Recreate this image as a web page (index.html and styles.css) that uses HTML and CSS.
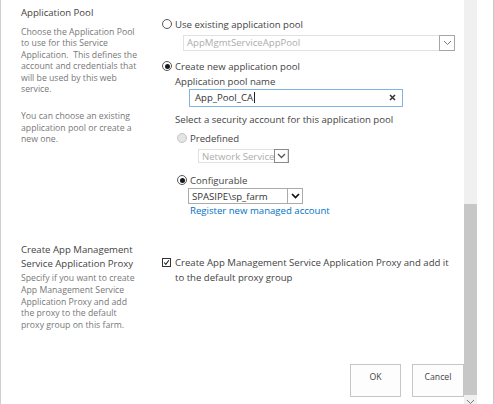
FILE: index.html
```html
<!DOCTYPE html>
<html lang="en">
<head>
<meta charset="utf-8">
<title>Application Pool</title>
<link rel="stylesheet" href="styles.css">
</head>
<body>
<div class="frame">
  <div class="content">
    <section class="section sec1">
      <div class="label-col">
        <h3 class="heading">Application Pool</h3>
        <p class="desc">Choose the Application Pool<br>to use for this Service<br>Application.&nbsp; This defines the<br>account and credentials that<br>will be used by this web<br>service.</p>
        <p class="desc para2">You can choose an existing<br>application pool or create a<br>new one.</p>
      </div>
      <div class="ctrl-col">
        <div class="opt opt-top"><span class="radio"></span><span>Use existing application pool</span></div>
        <div class="select sel-existing disabled"><span class="value">AppMgmtServiceAppPool</span><span class="arrow"><svg width="9" height="6" viewBox="0 0 9 6"><path d="M1 1 L4.5 4.5 L8 1" fill="none" stroke="#7a7a7a" stroke-width="1"/></svg></span></div>
        <div class="opt opt-new"><span class="radio checked"></span><span>Create new application pool</span></div>
        <div class="text-line name-label">Application pool name</div>
        <div class="input"><span class="value">App_Pool_CA</span><span class="caret"></span><span class="clear"><svg width="7" height="7" viewBox="0 0 7 7"><path d="M1 1 L6 6 M6 1 L1 6" stroke="#333" stroke-width="1.5" fill="none"/></svg></span></div>
        <div class="text-line sec-label">Select a security account for this application pool</div>
        <div class="opt opt-sub opt-pre"><span class="radio disabled"></span><span>Predefined</span></div>
        <div class="select sel-ns disabled"><span class="value">Network Service</span><span class="arrow"><svg width="9" height="6" viewBox="0 0 9 6"><path d="M1 1 L4.5 4.5 L8 1" fill="none" stroke="#555" stroke-width="1.3"/></svg></span></div>
        <div class="opt opt-sub opt-conf"><span class="radio checked"></span><span>Configurable</span></div>
        <div class="select sel-sp"><span class="value">SPASIPE\sp_farm</span><span class="arrow"><svg width="9" height="6" viewBox="0 0 9 6"><path d="M1 1 L4.5 4.5 L8 1" fill="none" stroke="#111" stroke-width="1.7"/></svg></span></div>
        <a class="link" href="#">Register new managed account</a>
      </div>
    </section>
    <section class="section sec2">
      <div class="label-col">
        <h3 class="heading">Create App Management<br>Service Application Proxy</h3>
        <p class="desc desc2">Specify if you want to create<br>App Management Service<br>Application Proxy and add<br>the proxy to the default<br>proxy group on this farm.</p>
      </div>
      <div class="ctrl-col">
        <div class="check-row"><span class="checkbox"><svg width="9" height="9" viewBox="0 0 9 9"><path d="M1.5 4.5 L3.6 6.8 L7.6 1.6" fill="none" stroke="#222" stroke-width="1.4"/></svg></span><span>Create App Management Service Application Proxy and add it<br>to the default proxy group</span></div>
      </div>
    </section>
    <div class="buttons">
      <button class="btn btn-ok" type="button">OK</button>
      <button class="btn btn-cancel" type="button">Cancel</button>
    </div>
  </div>
  <div class="scrollbar">
    <div class="thumb"></div>
    <div class="down"><svg width="13" height="9" viewBox="0 0 13 9"><path d="M3 5 L6.5 8.5 L10 5" fill="none" stroke="#777" stroke-width="1"/></svg></div>
  </div>
  <div class="gutter"></div>
</div>
</body>
</html>
```

FILE: styles.css
```css
html, body {
  margin: 0;
  padding: 0;
  background: #fff;
}

body {
  font-family: "Open Sans", "Noto Sans", sans-serif;
  color: #444;
}

.frame {
  display: flex;
  height: 404px;
  overflow: hidden;
}

.content {
  width: 463px;
  flex: none;
  border-left: 1px solid #cfcfcf;
  display: flex;
  flex-direction: column;
}

.section {
  display: grid;
  grid-template-columns: 129px 1fr;
  padding-left: 20px;
}

.sec1 .label-col {
  padding-top: 6px;
}

.heading {
  margin: 0;
  font-size: 9.6px;
  font-weight: normal;
  line-height: 14px;
  color: #444;
  white-space: nowrap;
}

.desc {
  margin: 7px 0 0;
  font-size: 8.7px;
  line-height: 11.4px;
  color: #777;
  white-space: nowrap;
}

.desc.para2 {
  margin-top: 16px;
}

.desc.desc2 {
  margin-top: 2px;
  line-height: 11.8px;
}

.ctrl-col {
  display: flex;
  flex-direction: column;
  align-items: flex-start;
  font-size: 9.6px;
  white-space: nowrap;
}

.opt {
  display: flex;
  align-items: center;
  gap: 3px;
  line-height: 15px;
  margin-left: 12px;
}

.opt-top { margin-top: 16.5px; }
.opt-new { margin-top: 8px; }
.opt-sub { margin-left: 27px; }
.opt-pre { margin-top: 4px; }
.opt-conf { margin-top: 9.5px; }

.radio {
  width: 10px;
  height: 10px;
  box-sizing: border-box;
  border: 1px solid #555;
  border-radius: 50%;
  background: #fff;
  display: flex;
  align-items: center;
  justify-content: center;
  flex: none;
}

.radio.checked::after {
  content: "";
  width: 5px;
  height: 5px;
  border-radius: 50%;
  background: #1a1a1a;
}

.radio.disabled {
  border-color: #c4c4c4;
  background: #e4e4e4;
}

.text-line {
  line-height: 15px;
  margin-left: 25px;
}

.sec-label { margin-top: 5px; }

.select {
  display: flex;
  align-items: stretch;
  box-sizing: border-box;
  border: 1px solid #ababab;
  background: #fff;
  color: #333;
}

.select .value {
  flex: 1;
  padding-left: 3px;
  display: flex;
  align-items: center;
}

.select .arrow {
  width: 15px;
  flex: none;
  box-sizing: border-box;
  border-left: 1px solid #ababab;
  display: flex;
  align-items: center;
  justify-content: center;
}

.select.disabled {
  border-color: #e1e1e1;
  color: #adadad;
}

.sel-existing {
  margin: 3px 0 0 33px;
  width: 272px;
  height: 16px;
}

.sel-existing .arrow {
  border: 1px solid #a6a6a6;
  margin: -1px -1px -1px 0;
  width: 16px;
}

.sel-ns {
  margin: 3.5px 0 0 48px;
  width: 90px;
  height: 14px;
  color: #999;
}

.sel-ns .arrow {
  border: 1px solid #8a8a8a;
  margin: -1px -1px -1px 0;
  width: 15px;
}

.sel-sp {
  margin: 0.5px 0 0 38px;
  width: 115px;
  height: 16px;
}

.input {
  margin-left: 39px;
  width: 214px;
  height: 18px;
  box-sizing: border-box;
  border: 1px solid #7fb3e2;
  display: flex;
  align-items: center;
  padding: 0 6px 0 5px;
  color: #333;
}

.input .caret {
  width: 1px;
  height: 11px;
  background: #222;
  margin-left: 1px;
}

.input .clear {
  margin-left: auto;
  display: flex;
}

.link {
  margin-left: 40px;
  line-height: 14px;
  color: #0072c6;
  text-decoration: none;
}

.sec2 {
  margin-top: 25px;
}

.sec2 .ctrl-col {
  padding-top: 11.5px;
}

.check-row {
  display: flex;
  align-items: flex-start;
  gap: 4px;
  margin-left: 12px;
  line-height: 15px;
}

.checkbox {
  width: 9px;
  height: 9px;
  box-sizing: border-box;
  border: 1px solid #333;
  margin-top: 3px;
  flex: none;
  display: flex;
  align-items: center;
  justify-content: center;
  background: #fff;
}

.checkbox svg {
  display: block;
}

.buttons {
  margin-top: 32px;
  display: flex;
  justify-content: flex-end;
  gap: 11px;
}

.btn {
  height: 33px;
  box-sizing: border-box;
  border: 1px solid #c6c6c6;
  background: #fdfdfd;
  font-family: "Open Sans", "Noto Sans", sans-serif;
  font-size: 8.7px;
  color: #444;
  padding: 0 0 6px;
  margin: 0;
}

.btn-ok { width: 51px; }
.btn-cancel { width: 52px; }

.scrollbar {
  width: 13px;
  flex: none;
  background: #f0f0f0;
  display: flex;
  flex-direction: column;
}

.thumb {
  margin-top: 204px;
  height: 191px;
  background: #c7c7c7;
}

.down {
  height: 9px;
  display: flex;
}

.gutter {
  width: 16px;
  flex: none;
  border-right: 1px solid #c8c8c8;
}
```
